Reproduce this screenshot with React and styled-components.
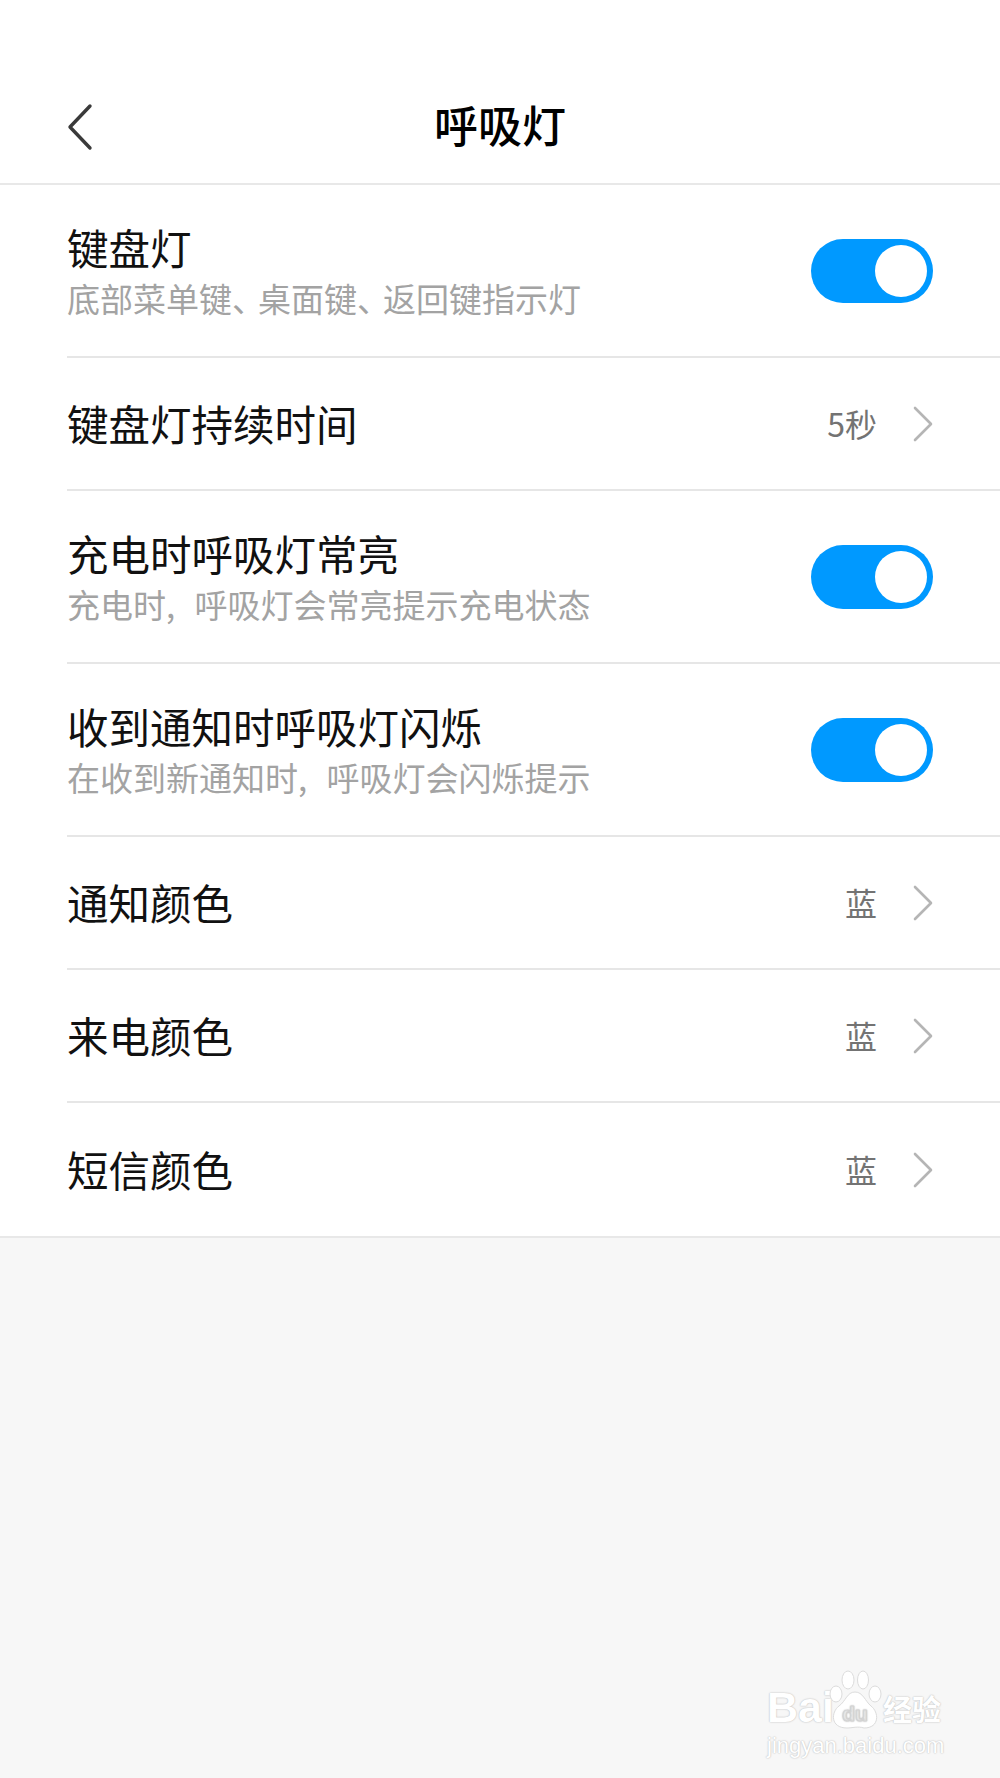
import styled, { createGlobalStyle } from "styled-components";

const GlobalStyle = createGlobalStyle`
  html, body {
    margin: 0;
    padding: 0;
    background: #f7f7f7;
    font-family: "Noto Sans CJK SC", "Noto Sans", sans-serif;
  }
`;

const Page = styled.div`
  position: relative;
  width: 1000px;
  height: 1778px;
  overflow: hidden;
  background: #f7f7f7;
`;

const Header = styled.header`
  height: 185px;
  box-sizing: border-box;
  padding-top: 80px;
  background: #fff;
  border-bottom: 2px solid #e8e8e8;
  display: grid;
  grid-template-columns: 67px 1fr 67px;
  grid-template-rows: 94px;
  align-items: center;
`;

const BackIcon = styled.svg`
  width: 28px;
  height: 48px;
  margin-left: 67px;
  grid-column: 1;
  grid-row: 1;
  display: block;
`;

const Title = styled.h1`
  grid-column: 2;
  grid-row: 1;
  margin: 0 0 6px;
  text-align: center;
  font-size: 44px;
  line-height: 80px;
  font-weight: 500;
  color: #000;
`;

const List = styled.div`
  background: #fff;
  padding-left: 67px;
  border-bottom: 2px solid #e8e8e8;
`;

const Row = styled.div`
  height: ${(p) => (p.$tall ? "173px" : "133px")};
  box-sizing: border-box;
  padding-right: 67px;
  display: flex;
  align-items: center;
  justify-content: space-between;
  border-bottom: ${(p) => (p.$last ? "none" : "2px solid #e6e6e6")};
`;

const Label = styled.div`
  display: flex;
  flex-direction: column;
  gap: 6px;
  margin-bottom: ${(p) => (p.$tall ? "0" : "2px")};
`;

const Name = styled.div`
  font-size: 41.5px;
  line-height: 48px;
  font-weight: 400;
  color: #111;
`;

const Hint = styled.div`
  font-size: 33px;
  line-height: 42px;
  word-spacing: 12px;
  color: #a3a3a3;
  white-space: nowrap;
`;

const Dun = styled.span`
  letter-spacing: -7px;
`;

const Toggle = styled.div`
  width: 122px;
  height: 64px;
  box-sizing: border-box;
  padding: 6px;
  border-radius: 32px;
  background: #0099ff;
  display: flex;
  justify-content: flex-end;
`;

const Knob = styled.div`
  width: 52px;
  height: 52px;
  border-radius: 50%;
  background: #fff;
`;

const Value = styled.div`
  display: flex;
  align-items: center;
  gap: 36px;
  font-size: 32px;
  line-height: 40px;
  color: #737373;
`;

const ValueText = styled.span`
  margin-bottom: 2px;
`;

const Chevron = styled.svg`
  width: 20px;
  height: 36px;
  display: block;
`;

const Watermark = styled.div`
  position: absolute;
  left: 767px;
  top: 1670px;
  width: 190px;
  color: #fff;
  text-shadow: 0 0 2px #c4c4c4, 0 0 1px #c4c4c4;
`;

const Brand = styled.div`
  display: flex;
  align-items: flex-end;
  height: 60px;
`;

const BrandText = styled.span`
  font-family: "Liberation Sans", sans-serif;
  font-size: 43px;
  line-height: 46px;
  font-weight: 700;
  width: 60px;
  flex: none;
`;

const Paw = styled.svg`
  width: 56px;
  height: 60px;
  display: block;
  flex: none;
`;

const BrandCn = styled.span`
  font-size: 29px;
  line-height: 44px;
  font-weight: 700;
  white-space: nowrap;
`;

const Domain = styled.div`
  font-family: "Liberation Sans", sans-serif;
  font-size: 22px;
  line-height: 26px;
  margin-top: 3px;
  white-space: nowrap;
`;

const rows = [
  { name: "键盘灯", hint: "底部菜单键、桌面键、返回键指示灯" },
  { name: "键盘灯持续时间", value: "5秒" },
  { name: "充电时呼吸灯常亮", hint: "充电时, 呼吸灯会常亮提示充电状态" },
  { name: "收到通知时呼吸灯闪烁", hint: "在收到新通知时, 呼吸灯会闪烁提示" },
  { name: "通知颜色", value: "蓝" },
  { name: "来电颜色", value: "蓝" },
  { name: "短信颜色", value: "蓝" },
];

function hintText(text) {
  const parts = text.split("、");
  return parts.map((part, i) => (
    <span key={i}>
      {part}
      {i < parts.length - 1 && <Dun>、</Dun>}
    </span>
  ));
}

export default function App() {
  return (
    <Page>
      <GlobalStyle />
      <Header>
        <BackIcon viewBox="0 0 28 48" fill="none">
          <path d="M23 3 L3 24 L23 45" stroke="#3a3a3a" strokeWidth="3.4" strokeLinecap="round" strokeLinejoin="round" />
        </BackIcon>
        <Title>呼吸灯</Title>
      </Header>
      <List>
        {rows.map((row, i) => (
          <Row key={row.name} $tall={!!row.hint} $last={i === rows.length - 1}>
            <Label $tall={!!row.hint}>
              <Name>{row.name}</Name>
              {row.hint && <Hint>{hintText(row.hint)}</Hint>}
            </Label>
            {row.hint ? (
              <Toggle>
                <Knob />
              </Toggle>
            ) : (
              <Value>
                <ValueText>{row.value}</ValueText>
                <Chevron viewBox="0 0 20 36" fill="none">
                  <path d="M2 2 L18 18 L2 34" stroke="#b5b5b5" strokeWidth="2.6" strokeLinecap="round" strokeLinejoin="round" />
                </Chevron>
              </Value>
            )}
          </Row>
        ))}
      </List>
      <Watermark>
        <Brand>
          <BrandText>Bai</BrandText>
          <Paw viewBox="0 0 56 60" fill="#fff" stroke="#dcdcdc" strokeWidth="1">
            <ellipse cx="9" cy="24" rx="6" ry="8" />
            <ellipse cx="21" cy="10" rx="6" ry="9" />
            <ellipse cx="36" cy="10" rx="5.5" ry="9" />
            <ellipse cx="48" cy="24" rx="6" ry="8" />
            <path d="M28 22 C20 22 19 31 12 36 C4 42 3 58 20 58 C25 58 31 56 37 58 C53 58 52 42 44 36 C38 31 36 22 28 22 Z" />
            <text x="28" y="51" textAnchor="middle" fontFamily="Liberation Sans, sans-serif" fontSize="21" fontWeight="700" fill="#f0f0f0" stroke="#d6d6d6" strokeWidth="0.6">du</text>
          </Paw>
          <BrandCn>经验</BrandCn>
        </Brand>
        <Domain>jingyan.baidu.com</Domain>
      </Watermark>
    </Page>
  );
}
